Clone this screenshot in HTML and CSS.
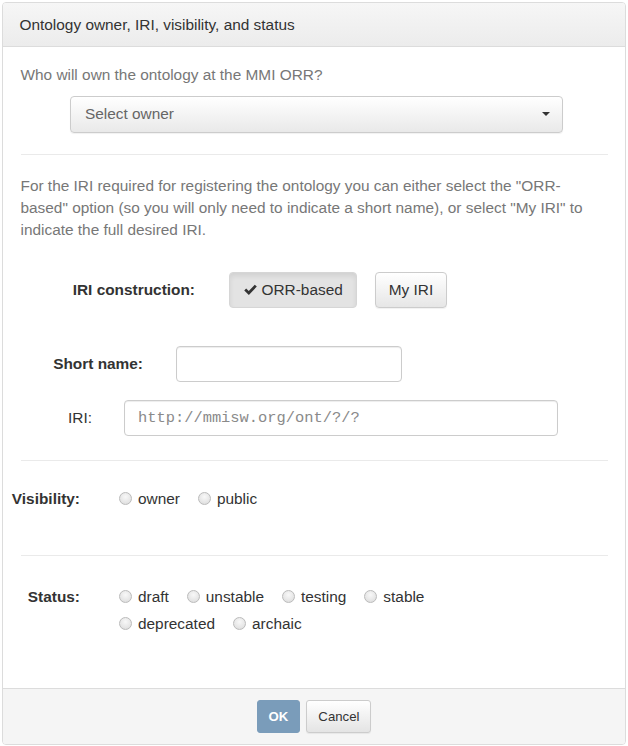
FILE: index.html
```html
<!DOCTYPE html>
<html>
<head>
<meta charset="utf-8">
<link rel="stylesheet" href="styles.css">
</head>
<body>
<div class="panel">
  <div class="panel-heading">Ontology owner, IRI, visibility, and status</div>
  <div class="panel-body">
    <p class="help first">Who will own the ontology at the MMI ORR?</p>
    <div class="select-btn"><span>Select owner</span><span class="caret"></span></div>
    <hr class="sep sep1">
    <p class="help para">For the IRI required for registering the ontology you can either select the "ORR-based" option (so you will only need to indicate a short name), or select "My IRI" to indicate the full desired IRI.</p>

    <div class="row row-construct">
      <div class="lbl lbl-construct">IRI construction:</div>
      <div class="btns">
        <div class="btn active"><svg class="check" width="13" height="11" viewBox="0 0 13 11"><path d="M1.2 5.6 L4.8 9 L11.8 1.6" fill="none" stroke="#333" stroke-width="2.8" stroke-linejoin="miter"/></svg>ORR-based</div>
        <div class="btn">My IRI</div>
      </div>
    </div>

    <div class="row row-short">
      <div class="lbl lbl-short">Short name:</div>
      <div class="input input-short"></div>
    </div>

    <div class="row row-iri">
      <div class="lbl lbl-iri normal">IRI:</div>
      <div class="input input-iri"><span class="placeholder">http://mmisw.org/ont/?/?</span></div>
    </div>

    <hr class="sep sep2">

    <div class="row row-vis">
      <div class="lbl lbl-small">Visibility:</div>
      <div class="opts">
        <label class="opt"><span class="radio"></span>owner</label>
        <label class="opt"><span class="radio"></span>public</label>
      </div>
    </div>

    <hr class="sep sep3">

    <div class="row row-status">
      <div class="lbl lbl-small">Status:</div>
      <div class="opts opts-status">
        <label class="opt"><span class="radio"></span>draft</label>
        <label class="opt"><span class="radio"></span>unstable</label>
        <label class="opt"><span class="radio"></span>testing</label>
        <label class="opt"><span class="radio"></span>stable</label>
        <label class="opt"><span class="radio"></span>deprecated</label>
        <label class="opt"><span class="radio"></span>archaic</label>
      </div>
    </div>
  </div>
  <div class="panel-footer">
    <div class="btn-sm primary">OK</div>
    <div class="btn-sm">Cancel</div>
  </div>
</div>
</body>
</html>
```

FILE: styles.css
```css
* { box-sizing: border-box; }
html, body { margin: 0; padding: 0; background: #fff; }
body {
  font-family: "Liberation Sans", Arial, Helvetica, sans-serif;
  font-size: 15.4px;
  line-height: 22px;
  color: #333;
}
.panel {
  margin: 2px;
  width: 624px;
  height: 743px;
  border: 1px solid #dcdcdc;
  border-radius: 4px;
  display: flex;
  flex-direction: column;
  overflow: hidden;
}
.panel-heading {
  padding: 10.5px 16.5px 10px;
  background: linear-gradient(#f6f6f6, #ececec);
  border-bottom: 1px solid #dcdcdc;
  color: #333;
}
.panel-body {
  flex: 1;
  padding: 17px 17px 0 17.5px;
}
.help { margin: 0; color: #777; }
.first { height: 22px; }
.select-btn {
  margin: 10px 0 0 49.5px;
  width: 493px;
  height: 37px;
  border: 1px solid #ccc;
  border-radius: 4px;
  background: linear-gradient(#ffffff, #e9e9e9);
  box-shadow: 0 1px 1px rgba(0,0,0,0.06);
  display: flex;
  align-items: center;
  justify-content: space-between;
  padding: 0 12px 0 14px;
  color: #666;
}
.caret {
  width: 0; height: 0;
  border-left: 4.5px solid transparent;
  border-right: 4.5px solid transparent;
  border-top: 4.5px solid #333;
}
.sep {
  border: 0;
  border-top: 1px solid #eaeaea;
  margin: 0;
  height: 0;
}
.sep1 { margin-top: 21px; }
.para { margin-top: 20px; }
.row { display: flex; align-items: center; }
.lbl {
  font-weight: bold;
  display: flex;
  justify-content: flex-end;
  white-space: nowrap;
}
.lbl.normal { font-weight: normal; }
.row-construct { margin-top: 31px; height: 36px; }
.lbl-construct { width: 174.5px; margin-right: 33.5px; }
.btns { display: flex; gap: 18px; }
.btn {
  height: 36px;
  padding: 0 13px;
  border: 1px solid #ccc;
  border-radius: 4px;
  background: linear-gradient(#ffffff, #e6e6e6);
  box-shadow: 0 1px 1px rgba(0,0,0,0.06);
  display: flex;
  align-items: center;
  color: #333;
}
.btn.active {
  background: #e3e3e3;
  border-color: #d6d6d6;
  box-shadow: inset 0 3px 5px rgba(0,0,0,0.08);
  padding: 0 13px 0 14px;
}
.check { margin-right: 5px; }
.row-short { margin-top: 38px; height: 36px; }
.lbl-short { width: 122.5px; margin-right: 32.5px; }
.input {
  height: 36px;
  border: 1px solid #ccc;
  border-radius: 4px;
  box-shadow: inset 0 1px 1px rgba(0,0,0,0.075);
  background: #fff;
  display: flex;
  align-items: center;
  padding: 0 13px;
}
.input-short { width: 226px; }
.row-iri { margin-top: 18px; height: 36px; }
.lbl-iri { width: 71.5px; margin-right: 32px; }
.input-iri { width: 434px; }
.placeholder {
  font-family: "Liberation Mono", "Courier New", monospace;
  font-size: 15.4px;
  color: #8a8a8a;
}
.sep2 { margin-top: 24px; }
.row-vis { margin-top: 27px; align-items: flex-start; }
.lbl-small { width: 59.5px; margin-right: 39px; }
.opts { display: flex; flex-wrap: wrap; column-gap: 18px; row-gap: 5px; }
.opts-status { width: 330px; }
.opt { display: flex; align-items: center; height: 22px; }
.radio {
  width: 13px;
  height: 13px;
  border-radius: 50%;
  border: 1px solid #bbbbbb;
  background: radial-gradient(circle at 50% 35%, #f8f8f8 0%, #e6e6e6 60%, #d8d8d8 100%);
  margin-right: 6px;
  flex: none;
}
.sep3 { margin-top: 45px; }
.row-status { margin-top: 30px; align-items: flex-start; }
.panel-footer {
  border-top: 1px solid #dcdcdc;
  background: #f5f5f5;
  padding: 11px 0 11px;
  display: flex;
  justify-content: center;
  gap: 6px;
}
.btn-sm {
  height: 33px;
  padding: 0 11px;
  font-size: 13.2px;
  border: 1px solid #ccc;
  border-radius: 3px;
  background: linear-gradient(#ffffff, #e4e4e4);
  box-shadow: 0 1px 1px rgba(0,0,0,0.06);
  display: flex;
  align-items: center;
  color: #333;
}
.btn-sm.primary {
  background: #7a9cba;
  border-color: #7a9cba;
  color: #fff;
  font-weight: bold;
  box-shadow: none;
}
```
